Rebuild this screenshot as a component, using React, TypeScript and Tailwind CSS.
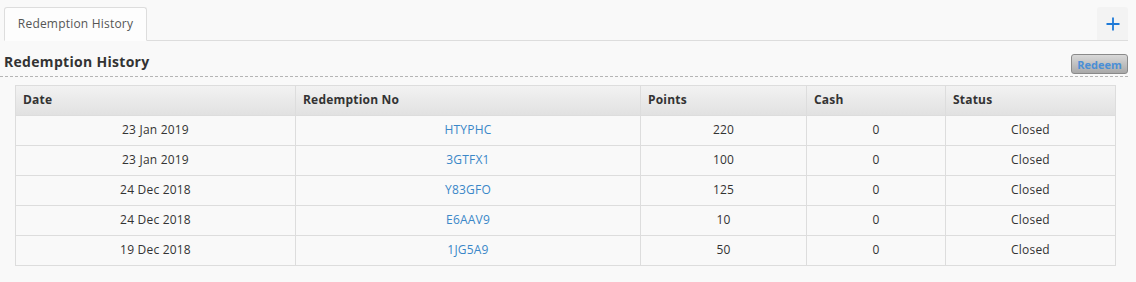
import React from 'react';

interface Redemption {
  date: string;
  no: string;
  points: number;
  cash: number;
  status: string;
}

const rows: Redemption[] = [
  { date: '23 Jan 2019', no: 'HTYPHC', points: 220, cash: 0, status: 'Closed' },
  { date: '23 Jan 2019', no: '3GTFX1', points: 100, cash: 0, status: 'Closed' },
  { date: '24 Dec 2018', no: 'Y83GFO', points: 125, cash: 0, status: 'Closed' },
  { date: '24 Dec 2018', no: 'E6AAV9', points: 10, cash: 0, status: 'Closed' },
  { date: '19 Dec 2018', no: '1JG5A9', points: 50, cash: 0, status: 'Closed' },
];

const App: React.FC = () => {
  return (
    <div className="w-[1136px] h-[282px] bg-[#f9f9f9] font-['Open_Sans',sans-serif] text-[#333]">
      {/* tab strip */}
      <div className="flex items-end justify-between pt-[7px] pl-1 pr-2">
        <div className="flex-1 flex items-end border-b border-[#dddddd]">
          <div className="w-[143px] h-[34px] -mb-px bg-[#fdfdfd] border border-[#dddddd] border-b-[#fdfdfd] rounded-t-[3px] flex items-center justify-center pb-px text-[12px] tracking-[0.2px] text-[#555]">
            Redemption History
          </div>
        </div>
        <div className="w-[31px] h-[34px] bg-[#f3f3f3] border-b border-[#dddddd] rounded-t-[3px] flex items-center justify-center">
          <svg width="14" height="14" viewBox="0 0 14 14">
            <path d="M7 0.5v13M0.5 7h13" stroke="#1e7ad8" strokeWidth="1.8" />
          </svg>
        </div>
      </div>

      {/* section header */}
      <div className="pr-2">
        <div className="flex items-center justify-between h-[36px] pl-1 border-b border-dashed border-[#b5b5b5]">
          <h2 className="text-[14px] font-bold tracking-[0.3px] text-[#333] mt-[5px]">Redemption History</h2>
          <button className="h-[20px] w-[57px] mt-[11px] rounded-[3px] border border-[#8a8a8a] bg-gradient-to-b from-[#d9d9d9] to-[#a9a9a9] text-[11px] font-bold text-[#4a8fd6] leading-none no-underline">
            Redeem
          </button>
        </div>
      </div>

      {/* table */}
      <div className="pl-[15px] pr-[20px] pt-2">
        <table className="w-full border-collapse text-[12px] tracking-[0.2px]">
          <thead>
            <tr className="h-[30px] bg-gradient-to-b from-[#f2f2f2] to-[#e1e1e1]">
              <th className="w-[280px] border border-[#dddddd] text-left font-bold pl-[7px] pb-px">Date</th>
              <th className="w-[345px] border border-[#dddddd] text-left font-bold pl-[7px] pb-px">Redemption No</th>
              <th className="w-[166px] border border-[#dddddd] text-left font-bold pl-[7px] pb-px">Points</th>
              <th className="w-[139px] border border-[#dddddd] text-left font-bold pl-[7px] pb-px">Cash</th>
              <th className="border border-[#dddddd] text-left font-bold pl-[7px] pb-px">Status</th>
            </tr>
          </thead>
          <tbody>
            {rows.map((r, i) => (
              <tr key={i} className="h-[30px] bg-[#f9f9f9]">
                <td className="border border-[#dddddd] text-center pb-px">{r.date}</td>
                <td className="border border-[#dddddd] text-center pb-px">
                  <a href="#" className="text-[#3a87c8] no-underline">{r.no}</a>
                </td>
                <td className="border border-[#dddddd] text-center pb-px">{r.points}</td>
                <td className="border border-[#dddddd] text-center pb-px">{r.cash}</td>
                <td className="border border-[#dddddd] text-center pb-px">{r.status}</td>
              </tr>
            ))}
          </tbody>
        </table>
      </div>
    </div>
  );
};

export default App;
